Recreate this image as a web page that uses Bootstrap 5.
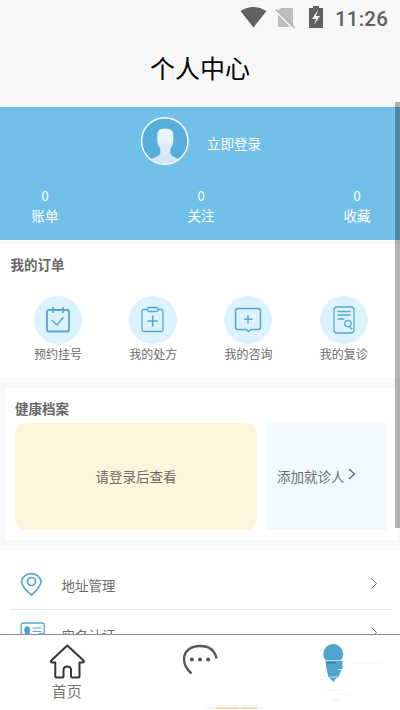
<!DOCTYPE html>
<html lang="zh-CN">
<head>
<meta charset="utf-8">
<meta name="viewport" content="width=device-width, initial-scale=1">
<title>个人中心</title>
<link rel="stylesheet" href="https://cdn.jsdelivr.net/npm/bootstrap@5.3.0/dist/css/bootstrap.min.css">
<style>
body{font-family:"Noto Sans CJK SC",sans-serif;font-size:13.5px;line-height:20px;color:#6c6c6c;background:#f7f7f7;height:710px;overflow:hidden}
svg{display:block;flex:none;fill:none}
.screen{width:400px;height:710px}
.status{height:36px;padding-right:12px}
.clock{font:500 20.5px/24px Roboto,sans-serif;color:#606060;letter-spacing:.2px;padding-top:2px;margin-left:1px}
.title{height:70.6px;font-size:25px;line-height:62px;color:#000}
.profile{height:133.4px;background:#70c0e8;padding-top:10px}
.avatar{margin-left:140px}
.login{margin-left:18px;padding-top:3px}
.stats{padding:0 16px 0 18px;margin-top:20px}
.stat{width:54px}
.num{font-size:13px;line-height:19px}
.orders{height:134px;margin-top:4px;padding:10px 0 0 10.5px}
.heading{font-size:13.5px;line-height:20px;font-weight:700;color:#686868}
.grid4{margin-top:22px}
.order{width:95.2px;font-size:12px;line-height:20px}
.disc{width:48px;height:48px;background:#dcf2fd}
.health{height:152px;margin:10px 2px 0 5px;padding:10px 11px 0 10px}
.record{width:242px;height:107px;background:#fff5dc;border-radius:11px}
.add{width:121px;height:107px;background:#f1f9ff;padding-left:11px}
.panels{margin-top:5px}
.menu{height:84px;margin-top:10px;padding:0 8px 0 10px}
.item{height:50px;padding:0 14px 0 10px}
.item:first-child{height:60px;border-bottom:1px solid #e7e7e7;padding-top:10px}
.item span{margin-left:19.500px;padding-top:2px}
.item .second{margin-left:16.500px;padding-top:0}
.tabs{height:76px;border-top:1px solid #8c8c8c}
.tab{font-size:15px;line-height:24px;color:#777}
.scrollbar{width:5px;height:426px;right:0;top:102px;background:rgba(0,0,0,.29)}
</style>
<script src="https://cdn.jsdelivr.net/npm/bootstrap@5.3.0/dist/js/bootstrap.bundle.min.js"></script>
</head>
<body>
<main class="screen position-relative d-flex flex-column overflow-hidden">
  <div class="status d-flex justify-content-end align-items-center flex-shrink-0">
    <svg width="94" height="24" viewBox="240 6 94 24"><path d="M240.500 11Q253.500 3 266.500 11L253.500 27.500Z" fill="#606060"/><path d="M280.500 8H292Q293 8 293 9V26Q293 27 292 27H279Q278 27 278 26V11Z" fill="#bdbdbd"/><path d="m276 11 17.500 18" stroke="#f7f7f7" stroke-width="2"/><path d="m276 9.500 18.500 18.500" stroke="#b5b5b5" stroke-width="1.700"/><path d="M309 8h4V6h6v2h4v20h-14Z" fill="#606060"/><path d="m318 10-6 9h4l-2 6 6-9h-4Z" fill="#f7f7f7"/></svg>
    <span class="clock">11:26</span>
  </div>
  <h1 class="title text-center mb-0 fw-normal flex-shrink-0">个人中心</h1>
  <section class="profile text-white flex-shrink-0">
    <div class="d-flex align-items-center">
      <svg class="avatar" width="49" height="49" viewBox="0 0 49 49"><defs><clipPath id="face"><circle cx="24.500" cy="24.500" r="23"/></clipPath><linearGradient id="shade" x2="0" y2="1"><stop stop-color="#f3f8fc"/><stop offset="1" stop-color="#cfe3f1"/></linearGradient></defs><g transform="translate(.3 -.5)"><circle cx="24.500" cy="24.500" r="23" fill="#56afdb"/><path clip-path="url(#face)" d="M17 18Q17 12 25 12Q33 12 33 18V25Q33 29 30 32V37Q31 40 40 43V49H9V43Q19 40 20 37V32Q17 29 17 25Z" fill="url(#shade)"/><circle cx="24.500" cy="24.500" r="23.200" stroke="#fff" stroke-width="1.400"/></g></svg>
      <span class="login">立即登录</span>
    </div>
    <div class="stats d-flex justify-content-between text-center">
      <div class="stat"><div class="num">0</div>账单</div>
      <div class="stat"><div class="num">0</div>关注</div>
      <div class="stat"><div class="num">0</div>收藏</div>
    </div>
  </section>
  <section class="orders bg-white flex-shrink-0">
    <h2 class="heading mb-0">我的订单</h2>
    <div class="grid4 d-flex">
      <div class="order text-center"><div class="disc rounded-circle mx-auto"><svg width="48" height="48" stroke="#57a8d0" stroke-width="1.800"><rect x="13" y="14" width="22" height="21.500" rx="2"/><path d="M19 11v6m10-6v6"/><path d="m18 24 5 5 6.500-8" stroke-width="1.500"/></svg></div>预约挂号</div>
      <div class="order text-center"><div class="disc rounded-circle mx-auto"><svg width="48" height="48" stroke="#57a8d0" stroke-width="1.300"><path d="M18 13.500h-3q-2 0-2 2V33q0 2.500 2 2.500h17q2 0 2-2.500V15.500q0-2-2-2h-3"/><rect x="18.500" y="11.500" width="10.500" height="4" rx="1.500"/><path d="M23.700 19.500v11M18.500 25h10.500" stroke-width="1.600"/></svg></div>我的处方</div>
      <div class="order text-center"><div class="disc rounded-circle mx-auto"><svg width="48" height="48" stroke="#57a8d0" stroke-width="1.500"><path d="M14 12.500h20q2.500 0 2.500 3V31q0 2.500-2.500 2.500h-7l-2.500 2-2.500-2h-8q-2.500 0-2.500-2.500V15.500q0-3 2.500-3Z"/><path d="M24 19v8.500m-4-4.200h8.500"/></svg></div>我的咨询</div>
      <div class="order text-center"><div class="disc rounded-circle mx-auto"><svg width="48" height="48" stroke="#57a8d0" stroke-width="1.300"><rect x="14" y="11" width="20" height="26" rx="3"/><path d="M17.500 15.500h13M17.500 19h13M17.500 23h7"/><circle cx="28" cy="27.500" r="3.200"/><path d="m29.500 30.500 2.500 3"/></svg></div>我的复诊</div>
    </div>
  </section>
  <section class="health bg-white flex-shrink-0">
    <h2 class="heading mb-0">健康档案</h2>
    <div class="panels d-flex justify-content-between">
      <div class="record d-flex justify-content-center align-items-center">请登录后查看</div>
      <div class="add d-flex align-items-center">添加就诊人<svg class="mb-1" width="11" height="12" viewBox="-3 0 11 12" stroke="#666" stroke-width="1.400"><path d="m1 1 5.500 5L1 11"/></svg></div>
    </div>
  </section>
  <section class="menu bg-white overflow-hidden flex-shrink-0">
    <div class="item d-flex align-items-center">
      <svg width="22" height="26" stroke="#57a8d0" stroke-width="1.700"><path d="M11.500 24.500Q1.500 16.500 1.500 10.500A10 9.500 0 0 1 21 10.500Q21 16.500 11.500 24.500Z" transform="translate(0 -.5)"/><circle cx="11.500" cy="10.500" r="4"/></svg>
      <span class="me-auto">地址管理</span>
      <svg width="7" height="12" stroke="#777"><path d="m.5.500 5 5-5 5"/></svg>
    </div>
    <div class="item d-flex align-items-center">
      <svg width="25" height="25" viewBox="0 0 25 25" stroke="#57a8d0"><rect x="1.200" y="1" width="23" height="20" rx="2" stroke-width="1.300"/><ellipse cx="7.200" cy="8" rx="2.600" ry="3.500" fill="#4a9fc9"/><path d="M3 15q0-3.500 4.500-4 4 .5 4 4Z" fill="#4a9fc9"/><path d="M12.500 6h9M12.500 9.500h9M12.500 12.500h5"/><circle cx="21" cy="14" r="3"/></svg>
      <span class="second me-auto">实名认证</span>
      <svg class="mb-1" width="7" height="12" stroke="#777"><path d="m.5.500 5 5-5 5"/></svg>
    </div>
  </section>
  <nav class="tabs bg-white row g-0 flex-shrink-0">
    <a class="tab col-4 text-decoration-none text-center" href="#"><svg class="mx-auto" width="36" height="44" stroke="#333" stroke-width="2" stroke-linejoin="round"><path d="M18.300 10.500 2.300 25.500q-1 2 1 2h3V41q0 1.500 1.500 1.500H13q1.500 0 1.500-1.500v-6q0-3.500 3.800-3.500t3.700 3.500v6q0 1.500 1.500 1.500h5.500q1.500 0 1.500-1.500V27.500h3q2 0 1-2Z"/></svg>首页</a>
    <a class="tab col-4" href="#" aria-label="消息"><svg width="133" height="75" viewBox="133 635 133 75"><path d="M191.500 673.500Q184 667 184 659C184 651 191 646 200 646Q214 646 216.500 658.500" stroke="#595959" stroke-width="2.400"/><g fill="#555"><circle cx="191.800" cy="659.500" r="2"/><circle cx="200" cy="659.500" r="2"/><circle cx="208.200" cy="659.500" r="2"/></g><defs><linearGradient id="glow" x2="0" y2="1"><stop stop-color="#fff"/><stop offset="1" stop-color="#f5f5f5"/></linearGradient></defs><path d="M212 704h46l6 5h-60Z" fill="url(#glow)"/><path d="M216 708.200h23m2 0h16" stroke="#f2d68d" stroke-width="1.600"/></svg></a>
    <a class="tab col-4" href="#" aria-label="我的"><svg width="133" height="75" viewBox="267 635 133 75"><circle cx="333.200" cy="654" r="10" fill="#4fa4ce"/><path d="M325.500 661h17v7l-2 4-2 5-3 2-2 3-2-2-3-3-2-8Z" fill="#4fa4ce"/><path d="M323 660.600h20M338 669.500h5M329 677h9" stroke="#e3f3fa" stroke-width=".8"/><path d="M327 662.700h9" stroke="#547c90" stroke-width="1.700"/><path d="M348 663h32M320 679.500h8M325 690h16M341 694h8" stroke="#f3f7f7"/><path d="M333 700.500h5" stroke="#d9eceb"/></svg></a>
  </nav>
  <div class="scrollbar position-absolute"></div>
</main>
</body>
</html>
